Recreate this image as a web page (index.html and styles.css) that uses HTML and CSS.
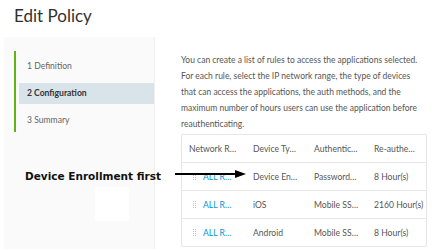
FILE: index.html
```html
<html><head><meta charset="UTF-8"><meta name="viewport" content="width=device-width, initial-scale=1.0"><title>Edit Policy</title>
<link rel="stylesheet" href="styles.css">
</head>
<body>
<div class="modal">
    <div class="modal-header">
        <h3 class="modal-title">Edit Policy</h3>
    </div>
    <div class="modal-body">
        <nav class="wizard-nav">
            <ul class="steps">
                <li class="step">1 Definition</li>
                <li class="step active">2 Configuration</li>
                <li class="step">3 Summary</li>
            </ul>
            <div class="blank-box"></div>
        </nav>
        <div class="wizard-content">
            <p class="intro">You can create a list of rules to access the applications selected. For each rule, select the IP network range, the type of devices that can access the applications, the auth methods, and the maximum number of hours users can use the application before reauthenticating.</p>
            <div class="datagrid">
                <div class="row header">
                    <div class="cell c1">Network R…</div>
                    <div class="cell c2">Device Ty…</div>
                    <div class="cell c3">Authentic…</div>
                    <div class="cell c4">Re-authe…</div>
                </div>
                <div class="row">
                    <div class="cell c1">
                        <svg class="grip" width="3" height="7" viewBox="0 0 3 7"><path d="M0 0h1v1H0zM2 0h1v1H2zM0 2h1v1H0zM2 2h1v1H2zM0 4h1v1H0zM2 4h1v1H2zM0 6h1v1H0zM2 6h1v1H2z" fill="#c4c4c4"/></svg>
                        <a class="link">ALL R…</a>
                    </div>
                    <div class="cell c2">Device En…</div>
                    <div class="cell c3">Password…</div>
                    <div class="cell c4">8 Hour(s)</div>
                </div>
                <div class="row">
                    <div class="cell c1">
                        <svg class="grip" width="3" height="7" viewBox="0 0 3 7"><path d="M0 0h1v1H0zM2 0h1v1H2zM0 2h1v1H0zM2 2h1v1H2zM0 4h1v1H0zM2 4h1v1H2zM0 6h1v1H0zM2 6h1v1H2z" fill="#c4c4c4"/></svg>
                        <a class="link">ALL R…</a>
                    </div>
                    <div class="cell c2">iOS</div>
                    <div class="cell c3">Mobile SS…</div>
                    <div class="cell c4">2160 Hour(s)</div>
                </div>
                <div class="row">
                    <div class="cell c1">
                        <svg class="grip" width="3" height="7" viewBox="0 0 3 7"><path d="M0 0h1v1H0zM2 0h1v1H2zM0 2h1v1H0zM2 2h1v1H2zM0 4h1v1H0zM2 4h1v1H2zM0 6h1v1H0zM2 6h1v1H2z" fill="#c4c4c4"/></svg>
                        <a class="link">ALL R…</a>
                    </div>
                    <div class="cell c2">Android</div>
                    <div class="cell c3">Mobile SS…</div>
                    <div class="cell c4">8 Hour(s)</div>
                </div>
            </div>
        </div>
    </div>
</div>

<!-- annotation -->
<div class="callout">Device Enrollment first</div>
<svg class="arrow" width="72" height="10" viewBox="0 0 72 10">
    <line x1="0" y1="5" x2="62" y2="5" stroke="#000" stroke-width="2"/>
    <polygon points="60,1 71,5 60,9" fill="#000"/>
</svg>
</body></html>
```
FILE: styles.css
```css
body {
    margin: 0;
    width: 439px;
    height: 249px;
    overflow: hidden;
    background-color: #ffffff;
    font-family: 'Lato', 'Liberation Sans', sans-serif;
    color: #565656;
    position: relative;
}

.modal {
    display: flex;
    flex-direction: column;
    height: 249px;
}

.modal-header {
    height: 37px;
    display: flex;
    align-items: center;
    padding-left: 14px;
}

.modal-title {
    margin: 0;
    font-size: 17px;
    font-weight: 400;
    color: #313131;
    padding-bottom: 7px;
}

.modal-body {
    flex: 1;
    display: flex;
    margin-left: 4px;
}

.wizard-nav {
    width: 150px;
    background-color: #fafafa;
    border-right: 1px solid #efefef;
    padding-top: 14px;
    position: relative;
}

.steps {
    list-style: none;
    margin: 0 0 0 10px;
    padding: 5px 0 1px 0;
    border-left: 2px solid #60b515;
    display: flex;
    flex-direction: column;
    gap: 6px;
}

.step {
    height: 21px;
    line-height: 21px;
    margin-left: 3px;
    padding-left: 8px;
    font-size: 8.6px;
    color: #666666;
}

.step.active {
    background-color: #d9e4ea;
    font-weight: 700;
    color: #333333;
}

.blank-box {
    position: absolute;
    left: 91px;
    top: 150px;
    width: 34px;
    height: 34px;
    background-color: #ffffff;
}

.wizard-content {
    flex: 1;
    padding: 15px 12px 0 26px;
}

.intro {
    margin: 0 0 2px 0;
    font-size: 8.5px;
    line-height: 16px;
    color: #565656;
}

.datagrid {
    border: 1px solid #e6e6e6;
    border-radius: 2px;
}

.row {
    display: flex;
    height: 28px;
    align-items: center;
    border-top: 1px solid #e6e6e6;
    box-sizing: border-box;
}

.row.header {
    border-top: none;
    height: 27px;
}

.cell {
    font-size: 8.6px;
    white-space: nowrap;
    padding-left: 8px;
    box-sizing: border-box;
    display: flex;
    align-items: center;
}

.c1 { width: 63px; padding-left: 7px; }
.c2 { width: 61px; }
.c3 { width: 60px; }
.c4 { width: 54px; }

.row:not(.header) .c1 { padding-left: 11px; }

.grip {
    margin-right: 7px;
    flex-shrink: 0;
}

.link {
    color: #0094d2;
}

.callout {
    position: absolute;
    left: 25px;
    top: 170px;
    font-family: 'DejaVu Sans', sans-serif;
    font-weight: 700;
    font-size: 10.5px;
    color: #111111;
}

.arrow {
    position: absolute;
    left: 175px;
    top: 169px;
}
```
